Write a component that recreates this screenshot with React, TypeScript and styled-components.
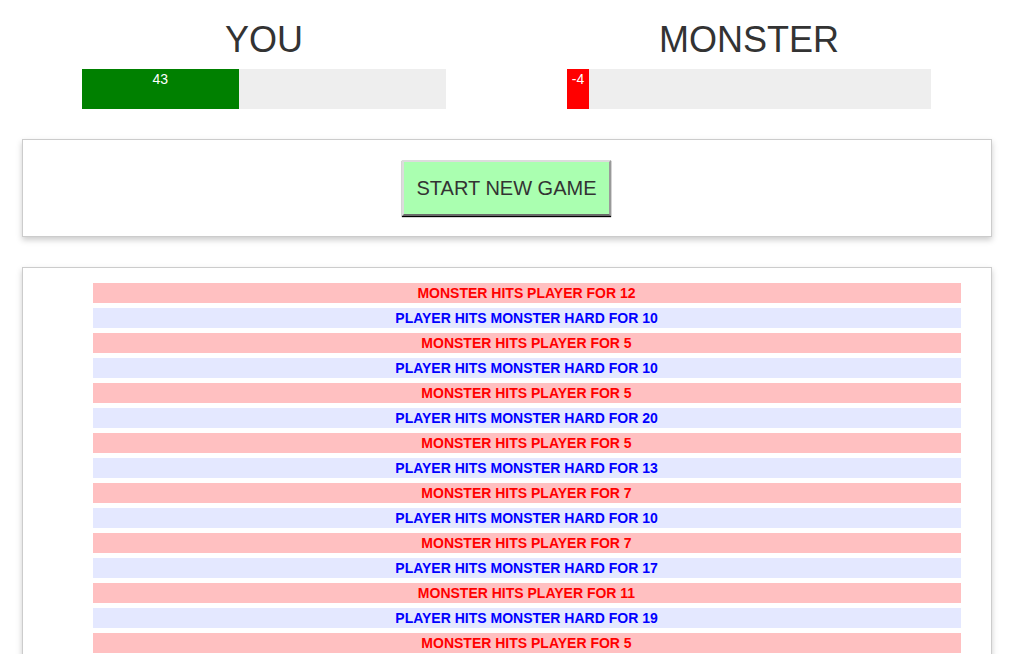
import React from "react";
import styled, { createGlobalStyle } from "styled-components";

const GlobalStyle = createGlobalStyle`
  html { overflow: hidden; }
  body {
    margin: 0;
    font-family: "Liberation Sans", Arial, Helvetica, sans-serif;
    font-size: 14px;
    line-height: 20px;
    color: #333;
    background: #fff;
  }
  * { box-sizing: border-box; }
`;

const Container = styled.div`
  width: 970px;
  margin: 0 auto;
`;

const StatusRow = styled.section`
  display: grid;
  grid-template-columns: 1fr 1fr;
`;

const Column = styled.div`
  padding: 0 15px;
  text-align: center;
`;

const Title = styled.h1`
  margin: 20px 0 10px;
  font-size: 36px;
  line-height: 39px;
  font-weight: 500;
  color: #333;
`;

const HealthBar = styled.div`
  width: 80%;
  height: 40px;
  margin: 0 auto;
  background-color: #eee;
  text-align: left;
`;

const HealthFill = styled.div<{ $color: string }>`
  height: 100%;
  background-color: ${(p) => p.$color};
  color: #fff;
  text-align: center;
  font-size: 14px;
  line-height: 20px;
`;

const Panel = styled.section`
  margin-top: 30px;
  padding: 10px;
  border: 1px solid #ccc;
  box-shadow: 0 3px 6px #ccc;
  text-align: center;
`;

const StartButton = styled.button`
  font-family: "Liberation Sans", Arial, Helvetica, sans-serif;
  font-size: 20px;
  line-height: 28px;
  height: 56px;
  color: #333;
  background-color: #aaffb0;
  padding: 12px;
  margin: 10px;
  border-width: 2px;
  border-style: solid;
  border-color: #dcdcdc #9a9a9a #6a6a6a #dcdcdc;
  box-shadow: 0 1px 1px black;
  vertical-align: top;
  cursor: pointer;
  &:hover { background-color: #76ff7e; }
`;

const LogInner = styled.div`
  padding: 0 15px;
`;

const LogList = styled.ul`
  list-style: none;
  margin: 0 0 10px;
  padding-left: 40px;
  font-weight: bold;
  text-transform: uppercase;
`;

const LogItem = styled.li<{ $player: boolean }>`
  margin: 5px;
  height: 20px;
  line-height: 20px;
  font-size: 14px;
  color: ${(p) => (p.$player ? "blue" : "red")};
  background-color: ${(p) => (p.$player ? "#e4e8ff" : "#ffc0c1")};
`;

const log: { player: boolean; text: string }[] = [
  { player: false, text: "Monster hits player for 12" },
  { player: true, text: "Player hits monster hard for 10" },
  { player: false, text: "Monster hits player for 5" },
  { player: true, text: "Player hits monster hard for 10" },
  { player: false, text: "Monster hits player for 5" },
  { player: true, text: "Player hits monster hard for 20" },
  { player: false, text: "Monster hits player for 5" },
  { player: true, text: "Player hits monster hard for 13" },
  { player: false, text: "Monster hits player for 7" },
  { player: true, text: "Player hits monster hard for 10" },
  { player: false, text: "Monster hits player for 7" },
  { player: true, text: "Player hits monster hard for 17" },
  { player: false, text: "Monster hits player for 11" },
  { player: true, text: "Player hits monster hard for 19" },
  { player: false, text: "Monster hits player for 5" },
];

export default function App() {
  const playerHealth = 43;
  return (
    <>
      <GlobalStyle />
      <Container>
        <StatusRow>
          <Column>
            <Title>YOU</Title>
            <HealthBar>
              <HealthFill $color="green" style={{ width: `${playerHealth}%` }}>
                {playerHealth}
              </HealthFill>
            </HealthBar>
          </Column>
          <Column>
            <Title>MONSTER</Title>
            <HealthBar>
              <HealthFill $color="red" style={{ width: "22px" }}>
                -4
              </HealthFill>
            </HealthBar>
          </Column>
        </StatusRow>
        <Panel>
          <StartButton>START NEW GAME</StartButton>
        </Panel>
        <Panel>
          <LogInner>
            <LogList>
              {log.map((entry, i) => (
                <LogItem key={i} $player={entry.player}>
                  {entry.text}
                </LogItem>
              ))}
            </LogList>
          </LogInner>
        </Panel>
      </Container>
    </>
  );
}
